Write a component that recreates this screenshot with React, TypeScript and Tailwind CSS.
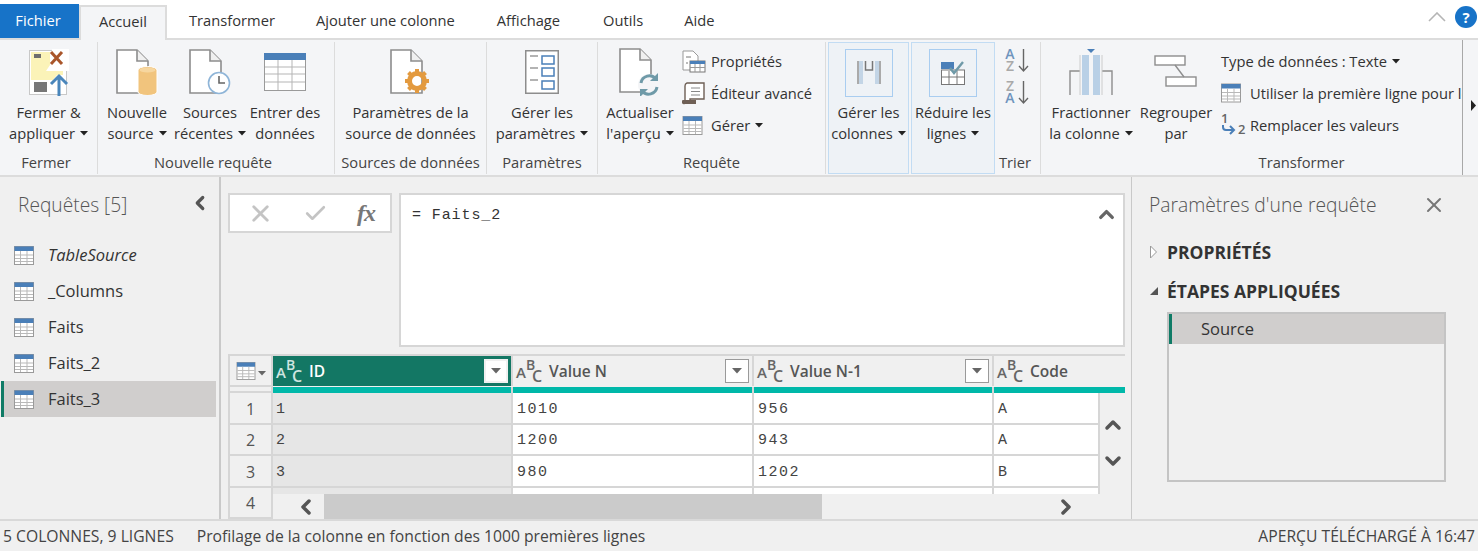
import React from 'react';
import { ChevronUp, ChevronDown, ChevronLeft, ChevronRight, X, Check } from 'lucide-react';

function Caret() {
    return (
        <svg width="8" height="5" viewBox="0 0 8 5" className="inline-block ml-[5px] mb-[4px]">
            <path d="M0 0h8L4 4.5z" fill="#222" />
        </svg>
    );
}

function TableIcon({ w = 20, h = 19 }: { w?: number; h?: number }) {
    return (
        <svg width={w} height={h} viewBox="0 0 20 19" className="shrink-0">
            <rect x="0.5" y="0.5" width="19" height="18" fill="#fff" stroke="#9a9a9a" />
            <rect x="0.5" y="0.5" width="19" height="4.5" fill="#4a7fb8" />
            <path d="M1 9h18M1 12.5h18M1 15.5h18M6.5 5v13M13 5v13" stroke="#b9b9b9" strokeWidth="1" />
        </svg>
    );
}

function DocShape() {
    return (
        <g>
            <path d="M1 1h20l11 11v32H1z" fill="#fff" stroke="#8d8d8d" strokeWidth="1.6" />
            <path d="M21 1v11h11" fill="#f0f0f0" stroke="#8d8d8d" strokeWidth="1.6" />
        </g>
    );
}

function FermerIcon() {
    return (
        <svg width="40" height="47" viewBox="0 0 40 47">
            <rect x="0.5" y="1.5" width="37" height="44" fill="#fff" stroke="#c8c8c8" />
            <path d="M2 3h19v13l-4 6h17v4h-6l-5 6v-1H2z" fill="#fbf3b8" />
            <rect x="5" y="5" width="7" height="4" fill="#6e6e6e" />
            <rect x="5" y="33" width="13" height="10" fill="#777" />
            <rect x="23" y="0" width="17" height="22" fill="#fff" />
            <path d="M22 3l11 12M33 3L22 15" stroke="#a9562b" strokeWidth="3" />
            <path d="M30 47V27M22 35l8-8 8 8" fill="none" stroke="#4a86bb" strokeWidth="3" />
        </svg>
    );
}

function NewSourceIcon() {
    return (
        <svg width="42" height="46" viewBox="0 0 42 46">
            <DocShape />
            <path d="M22 21a9.5 3.5 0 0 1 19 0v22a9.5 3.5 0 0 1-19 0z" fill="#f1c47d" stroke="#fff" strokeWidth="1" />
            <ellipse cx="31.5" cy="21" rx="8" ry="2.5" fill="#f6d69f" />
        </svg>
    );
}

function RecentIcon() {
    return (
        <svg width="42" height="46" viewBox="0 0 42 46">
            <DocShape />
            <circle cx="30" cy="34" r="10.5" fill="#fff" stroke="#8fb5d8" strokeWidth="1.6" />
            <path d="M30 27v7h6" fill="none" stroke="#666" strokeWidth="1.6" />
        </svg>
    );
}

function EnterDataIcon() {
    return (
        <svg width="42" height="38" viewBox="0 0 42 38">
            <rect x="0.5" y="0.5" width="41" height="37" fill="#fff" stroke="#9a9a9a" />
            <rect x="0" y="0" width="42" height="7" fill="#4a7fb8" />
            <path d="M1 14h40M1 21h40M1 29h40M14 7v30M28 7v30" stroke="#b5b5b5" strokeWidth="1" />
        </svg>
    );
}

function GearDocIcon() {
    return (
        <svg width="42" height="46" viewBox="0 0 42 46">
            <DocShape />
            <circle cx="27" cy="32" r="7.5" fill="none" stroke="#e39a3f" strokeWidth="5" />
            <path d="M27 20v5M27 39v5M15 32h5M34 32h5M18.5 23.5l3.5 3.5M32 37l3.5 3.5M35.5 23.5L32 27M22 37l-3.5 3.5" stroke="#e39a3f" strokeWidth="4" />
        </svg>
    );
}

function ParamsIcon() {
    return (
        <svg width="34" height="44" viewBox="0 0 34 44">
            <rect x="0.75" y="0.75" width="32.5" height="42.5" fill="#fff" stroke="#8d8d8d" strokeWidth="1.5" />
            <path d="M5 6h8M5 18h8M5 30h8" stroke="#9a9a9a" strokeWidth="1.5" />
            <rect x="17" y="6" width="12" height="8" fill="#fff" stroke="#4a7fb8" strokeWidth="1.5" />
            <rect x="17" y="18" width="12" height="8" fill="#fff" stroke="#4a7fb8" strokeWidth="1.5" />
            <rect x="17" y="31" width="12" height="8" fill="#fff" stroke="#4a7fb8" strokeWidth="1.5" />
        </svg>
    );
}

function RefreshDocIcon() {
    return (
        <svg width="42" height="48" viewBox="0 0 42 48">
            <DocShape />
            <circle cx="30" cy="37" r="11" fill="#f4f5f7" />
            <path d="M22 35a8.5 8.5 0 0 1 15-4M38 39a8.5 8.5 0 0 1-15 4" fill="none" stroke="#6f9aa8" strokeWidth="3" />
            <path d="M39 25v8h-8zM21 49v-8h8z" fill="#6f9aa8" />
        </svg>
    );
}

function PropsIcon() {
    return (
        <svg width="24" height="23" viewBox="0 0 24 23">
            <path d="M1 1h10l5 5v14H1z" fill="#fff" stroke="#999" />
            <path d="M4 7h5M4 13h2" stroke="#777" />
            <rect x="8" y="11" width="15" height="11" fill="#fff" stroke="#777" />
            <rect x="8" y="11" width="15" height="3" fill="#4a7fb8" />
            <path d="M8 17.5h15M13 14v8M18 14v8" stroke="#999" />
        </svg>
    );
}

function ScrollIcon() {
    return (
        <svg width="24" height="23" viewBox="0 0 24 23">
            <path d="M5 1h17v16H8v4H3V4a3 3 0 0 1 2-3z" fill="#fff" stroke="#6e5f55" strokeWidth="1.4" />
            <path d="M9 6h9M9 9.5h9M9 13h9" stroke="#888" />
            <path d="M1 18h13v4H3a2 2 0 0 1-2-4z" fill="#6e5f55" />
        </svg>
    );
}

function ManageColsIcon() {
    return (
        <svg width="24" height="25" viewBox="0 0 24 25">
            <rect x="0" y="1" width="6" height="23" fill="#c3d5e6" />
            <rect x="0" y="1" width="2" height="23" fill="#aaa" />
            <rect x="18" y="1" width="6" height="23" fill="#c3d5e6" />
            <rect x="22" y="1" width="2" height="23" fill="#aaa" />
            <path d="M8.5 1v9h7V1" fill="none" stroke="#777" strokeWidth="1.5" />
        </svg>
    );
}

function ReduceRowsIcon() {
    return (
        <svg width="24" height="24" viewBox="0 0 24 24">
            <rect x="0.5" y="9" width="23" height="14.5" fill="#fff" stroke="#777" />
            <rect x="0" y="1" width="13" height="7" fill="#4a7fb8" />
            <path d="M0 16h24M8 10v14M16 10v14" stroke="#777" />
            <path d="M9 7l4 5 9-11" fill="none" stroke="#6f9aa8" strokeWidth="2.4" />
        </svg>
    );
}

function SortIcon({ top, bottom }: { top: string; bottom: string }) {
    return (
        <svg width="26" height="27" viewBox="0 0 26 27" className="shrink-0 overflow-visible" style={{ fontFamily: '"Open Sans", sans-serif' }}>
            <text x="7" y="11" textAnchor="middle" fontSize="14" fontWeight="600" fill={top === 'A' ? '#6f94bd' : '#a9a9a9'}>{top}</text>
            <text x="7" y="23" textAnchor="middle" fontSize="14" fontWeight="600" fill={bottom === 'A' ? '#6f94bd' : '#a9a9a9'}>{bottom}</text>
            <path d="M20.5 1v22M16 18l4.5 5 4.5-5" fill="none" stroke="#666" strokeWidth="1.4" />
        </svg>
    );
}

function SplitIcon() {
    return (
        <svg width="44" height="46" viewBox="0 0 44 46">
            <path d="M1 46V22h10M43 46V22H33" fill="none" stroke="#8d8d8d" strokeWidth="1.4" />
            <rect x="13" y="6" width="7" height="40" fill="#b9d0e6" />
            <rect x="24" y="6" width="7" height="40" fill="#b9d0e6" />
            <path d="M11 6v40M33 6v40" stroke="#ccc" />
            <path d="M18 0h8l-4 4z" fill="#4a7fb8" />
        </svg>
    );
}

function GroupByIcon() {
    return (
        <svg width="44" height="34" viewBox="0 0 44 34">
            <rect x="1" y="1" width="30" height="9" fill="#fff" stroke="#8d8d8d" strokeWidth="1.4" />
            <rect x="12" y="22" width="30" height="9" fill="#fff" stroke="#8d8d8d" strokeWidth="1.4" />
            <path d="M21 10l9 12" stroke="#8d8d8d" strokeWidth="1.4" />
        </svg>
    );
}

function ReplaceIcon() {
    return (
        <svg width="26" height="24" viewBox="0 0 26 24" className="shrink-0 overflow-visible" style={{ fontFamily: '"Open Sans", sans-serif' }}>
            <text x="0" y="10" fontSize="13" fontWeight="600" fill="#666">1</text>
            <text x="17" y="21" fontSize="13" fontWeight="600" fill="#666">2</text>
            <path d="M2 12v2a3 3 0 0 0 3 3h8M9 13l4 4-4 4" fill="none" stroke="#4a7fb8" strokeWidth="2" />
        </svg>
    );
}

function AbcIcon({ color }: { color: string }) {
    return (
        <svg width="26" height="26" viewBox="0 0 26 26" className="shrink-0 overflow-visible" style={{ fontFamily: '"Open Sans", sans-serif' }}>
            <text x="0" y="20" fontSize="15" fontWeight="600" fill={color}>A</text>
            <text x="10" y="12" fontSize="14" fontWeight="600" fill={color}>B</text>
            <text x="16" y="24" fontSize="16" fontWeight="600" fill={color}>C</text>
        </svg>
    );
}

function FilterButton({ active }: { active?: boolean }) {
    return (
        <div className={`ml-auto w-[24px] h-[24px] bg-white flex items-center justify-center shrink-0 ${active ? 'border-2 border-[#f0f0f0]' : 'border border-[#9a9a9a]'}`}>
            <svg width="10" height="6" viewBox="0 0 10 6">
                <path d="M0 0h10L5 5.5z" fill="#666" />
            </svg>
        </div>
    );
}

function BigButton({ w, icon, line1, line2, caret, highlight }: { w: number; icon: React.ReactNode; line1: string; line2: string; caret?: boolean; highlight?: boolean }) {
    return (
        <div className="flex flex-col items-center shrink-0" style={{ width: w }}>
            {highlight ? (
                <div className="h-[59px] flex items-center justify-center">
                    <div className="w-[48px] h-[48px] border border-[#a9cdf0] flex items-center justify-center">{icon}</div>
                </div>
            ) : (
                <div className="h-[60px] flex items-center justify-center">{icon}</div>
            )}
            <div className="text-center leading-[21px] whitespace-nowrap">
                <div>{line1}</div>
                <div>{line2}{caret && <Caret />}</div>
            </div>
        </div>
    );
}

function SmallButton({ icon, label, caret }: { icon: React.ReactNode; label: string; caret?: boolean }) {
    return (
        <div className="h-[32px] flex items-center whitespace-nowrap">
            <div className="w-[29px] shrink-0 flex items-center">{icon}</div>
            <span>{label}{caret && <Caret />}</span>
        </div>
    );
}

function Group({ w, label, children, className = '', labelClassName = '' }: { w: number; label: string; children: React.ReactNode; className?: string; labelClassName?: string }) {
    return (
        <div className="flex flex-col shrink-0 h-[132px] border-r border-[#dcdcdc]" style={{ width: w }}>
            <div className={`flex-1 flex ${className}`}>{children}</div>
            <div className={`h-[22px] text-center text-[#444] leading-[20px] ${labelClassName}`}>{label}</div>
        </div>
    );
}

function Ribbon() {
    return (
        <div className="flex h-[137px] bg-[#f4f5f7] border-b-2 border-[#dcdcdc] pt-[2px] overflow-hidden">
            <Group w={98} label="Fermer" className="justify-center" labelClassName="pr-[5px]">
                <BigButton w={90} icon={<FermerIcon />} line1="Fermer &" line2="appliquer" caret />
            </Group>
            <Group w={237} label="Nouvelle requête" className="pl-[2px]" labelClassName="pr-[6px]">
                <BigButton w={74} icon={<NewSourceIcon />} line1="Nouvelle" line2="source" caret />
                <BigButton w={72} icon={<RecentIcon />} line1="Sources" line2="récentes" caret />
                <BigButton w={78} icon={<EnterDataIcon />} line1="Entrer des" line2="données" />
            </Group>
            <Group w={152} label="Sources de données" className="justify-center">
                <BigButton w={150} icon={<GearDocIcon />} line1="Paramètres de la" line2="source de données" />
            </Group>
            <Group w={111} label="Paramètres" className="justify-center">
                <BigButton w={100} icon={<ParamsIcon />} line1="Gérer les" line2="paramètres" caret />
            </Group>
            <Group w={228} label="Requête" className="pl-[7px] gap-[7px]">
                <BigButton w={70} icon={<RefreshDocIcon />} line1="Actualiser" line2="l'aperçu" caret />
                <div className="flex flex-col pt-[3px]">
                    <SmallButton icon={<PropsIcon />} label="Propriétés" />
                    <SmallButton icon={<ScrollIcon />} label="Éditeur avancé" />
                    <SmallButton icon={<TableIcon w={21} h={19} />} label="Gérer" caret />
                </div>
            </Group>
            <div className="flex shrink-0 h-[132px] gap-[2px] pl-[2px]">
                <div className="w-[81px] bg-[#eef2f6] border border-[#c2dcf3]">
                    <BigButton w={79} highlight icon={<ManageColsIcon />} line1="Gérer les" line2="colonnes" caret />
                </div>
                <div className="w-[84px] bg-[#eef2f6] border border-[#c2dcf3]">
                    <BigButton w={82} highlight icon={<ReduceRowsIcon />} line1="Réduire les" line2="lignes" caret />
                </div>
            </div>
            <Group w={46} label="Trier" labelClassName="pr-[5px]">
                <div className="flex flex-col gap-[5px] pl-[8px] pt-[6px]">
                    <SortIcon top="A" bottom="Z" />
                    <SortIcon top="Z" bottom="A" />
                </div>
            </Group>
            <div className="flex flex-col shrink-0 w-[421px] h-[132px]">
                <div className="flex-1 flex pl-[9px] min-h-0">
                    <BigButton w={82} icon={<SplitIcon />} line1="Fractionner" line2="la colonne" caret />
                    <BigButton w={88} icon={<GroupByIcon />} line1="Regrouper" line2="par" />
                    <div className="flex flex-col pt-[3px] pl-[1px] overflow-hidden flex-1">
                        <div className="h-[32px] flex items-center whitespace-nowrap"><span>Type de données : Texte<Caret /></span></div>
                        <SmallButton icon={<TableIcon w={20} h={20} />} label="Utiliser la première ligne pour les en-têtes" />
                        <SmallButton icon={<ReplaceIcon />} label="Remplacer les valeurs" />
                    </div>
                </div>
                <div className="h-[22px] text-center text-[#444] leading-[20px] pl-[100px]">Transformer</div>
            </div>
            <div className="flex-1 border-l border-[#a8a8a8] -mt-[2px] flex items-center justify-end pr-[1px] pb-[5px]">
                <svg width="7" height="11" viewBox="0 0 7 11"><path d="M1 0l5 5.5L1 11z" fill="#222" /></svg>
            </div>
        </div>
    );
}

function TopTabs() {
    return (
        <div className="h-[38px] flex items-end border-b-2 border-[#dcdcdc] bg-white box-content">
            <div className="w-[79px] h-[34px] bg-[#1773c8] text-white flex items-center justify-center pb-[2px] pr-[3px]">Fichier</div>
            <div className="w-[88px] h-[35px] -mb-[2px] bg-[#f4f5f7] border-t-2 border-x-2 border-[#dcdcdc] flex items-center justify-center pb-[4px]">Accueil</div>
            <div className="flex h-[34px] items-center pl-[22px] pb-[2px]">
                <span>Transformer</span>
                <span className="ml-[41px]">Ajouter une colonne</span>
                <span className="ml-[42px]">Affichage</span>
                <span className="ml-[43px]">Outils</span>
                <span className="ml-[41px]">Aide</span>
            </div>
            <div className="ml-auto flex h-[38px] items-center gap-[9px] pr-[1px] pb-[4px]">
                <svg width="18" height="10" viewBox="0 0 18 10"><path d="M1 9l8-8 8 8" fill="none" stroke="#b5b5b5" strokeWidth="1.6" /></svg>
                <div className="w-[22px] h-[22px] rounded-full bg-[#1773c8] text-white flex items-center justify-center font-bold text-[15px]">?</div>
            </div>
        </div>
    );
}

const queries = ['TableSource', '_Columns', 'Faits', 'Faits_2', 'Faits_3'];

function QueriesPane() {
    return (
        <div className="w-[221px] shrink-0 border-r-2 border-[#c9c9c9] flex flex-col">
            <div className="h-[60px] flex items-start justify-between pl-[18px] pr-[8px] pt-[14px]">
                <span className="text-[19.2px] leading-[28px] text-[#555] font-light">Requêtes [5]</span>
                <ChevronLeft size={22} strokeWidth={3.5} className="text-[#555] mt-[1px]" />
            </div>
            <div className="flex flex-col pl-[1px] pr-[3px]">
                {queries.map((q, i) => (
                    <div key={q} className={`h-[36px] flex items-center gap-[14px] text-[16.5px] ${i === 4 ? 'bg-[#d0cecd] border-l-[3px] border-[#0f7b66] pl-[10px]' : 'pl-[13px]'} ${i === 0 ? 'italic' : ''}`}>
                        <TableIcon />
                        <span>{q}</span>
                    </div>
                ))}
            </div>
        </div>
    );
}

function FormulaBar() {
    return (
        <div className="flex gap-[7px] h-[154px] items-start">
            <div className="w-[164px] h-[40px] bg-white border-2 border-[#d6d6d6] flex items-center justify-between pl-[17px] pr-[14px]">
                <X size={27} strokeWidth={2.5} className="text-[#c4c4c4]" />
                <Check size={25} strokeWidth={2.5} className="text-[#c4c4c4]" />
                <span className="text-[24px] leading-[24px] italic font-bold tracking-[-1px] text-[#777] pr-[1px]" style={{ fontFamily: '"Liberation Serif", serif' }}>fx</span>
            </div>
            <div className="flex-1 h-[154px] bg-white border-2 border-[#d6d6d6] flex items-start justify-between pl-[11px] pr-[5px] pt-[7px]">
                <span className="text-[15px] leading-[24px] mt-[2px] text-[#333] tracking-[0.9px]" style={{ fontFamily: '"Liberation Mono", monospace' }}>= Faits_2</span>
                <ChevronUp size={23} strokeWidth={3.5} className="text-[#666] mt-[1px]" />
            </div>
        </div>
    );
}

const columns = [
    { name: 'ID', w: 240, values: ['1', '2', '3'] },
    { name: 'Value N', w: 241, values: ['1010', '1200', '980'] },
    { name: 'Value N-1', w: 240, values: ['956', '943', '1202'] },
    { name: 'Code', w: 106, values: ['A', 'A', 'B'] },
];

function DataGrid() {
    return (
        <div className="flex-1 flex border-t-2 border-l-2 border-[#d6d6d6] mt-[7px] overflow-hidden min-h-0">
            <div className="w-[43px] shrink-0 flex flex-col text-[#555] text-[16px] border-r-2 border-[#d6d6d6]">
                <div className="h-[31px] border-b-2 border-[#d6d6d6] flex items-center justify-center">
                    <TableIcon w={20} h={18} />
                    <svg width="8" height="5" viewBox="0 0 8 5" className="ml-[2px] mt-[6px]"><path d="M0 0h8L4 4.5z" fill="#666" /></svg>
                </div>
                <div className="h-[6px] border-b-2 border-[#d6d6d6]" />
                {['1', '2', '3', '4'].map(n => (
                    <div key={n} className="h-[31.5px] shrink-0 border-b-2 border-[#d6d6d6] flex items-center justify-center pt-[2px]">{n}</div>
                ))}
            </div>
            <div className="flex-1 flex flex-col min-w-0">
                <div className="flex h-[31px] shrink-0">
                    {columns.map((c, i) => (
                        <div key={c.name} className={`flex items-center h-[30px] pl-[3px] pr-[3px] gap-[7px] text-[15.5px] font-semibold ${i === 3 ? 'flex-1' : 'shrink-0 border-r-2 border-[#d6d6d6]'} ${i === 0 ? 'bg-[#137764] text-white' : 'text-[#555]'}`} style={i === 3 ? undefined : { width: c.w }}>
                            <AbcIcon color={i === 0 ? '#cfe5e0' : '#666'} />
                            <span className="pt-[2px]">{c.name}</span>
                            {i < 3 && <FilterButton active={i === 0} />}
                        </div>
                    ))}
                </div>
                <div className="flex h-[6px] shrink-0">
                    {columns.map((c, i) => (
                        <div key={c.name} className={`bg-[#00b8a9] h-full ${i === 3 ? 'flex-1' : 'shrink-0 border-r-2 border-[#d6d6d6]'}`} style={i === 3 ? undefined : { width: c.w }} />
                    ))}
                </div>
                <div className="flex h-[101px] shrink-0 overflow-hidden">
                    {columns.map((c, i) => (
                        <div key={c.name} className={`shrink-0 border-r-2 border-[#d6d6d6] last:border-r-0 ${i === 0 ? 'bg-[#e6e6e6]' : 'bg-white'}`} style={{ width: c.w }}>
                            {c.values.map(v => (
                                <div key={v} className={`h-[31.5px] border-b-2 border-[#d6d6d6] flex items-center pt-[4px] text-[15px] tracking-[1.5px] text-[#444] ${i === 0 ? 'pl-[3px]' : 'pl-[4px]'}`} style={{ fontFamily: '"Liberation Mono", monospace' }}>{v}</div>
                            ))}
                        </div>
                    ))}
                    <div className="flex-1 bg-[#f0f0f0] flex flex-col items-center pt-[20px]">
                        <ChevronUp size={24} strokeWidth={3.5} className="text-[#555]" />
                        <ChevronDown size={24} strokeWidth={3.5} className="text-[#555] mt-[12px]" />
                    </div>
                </div>
                <div className="h-[25px] flex items-center bg-[#f0f0f0]">
                    <div className="w-[51px] flex justify-center shrink-0 pl-[14px]"><ChevronLeft size={24} strokeWidth={3.5} className="text-[#555]" /></div>
                    <div className="w-[498px] h-full bg-[#cbcbcb] shrink-0" />
                    <div className="w-[256px] flex justify-end shrink-0"><ChevronRight size={24} strokeWidth={3.5} className="text-[#555]" /></div>
                </div>
            </div>
        </div>
    );
}

function SettingsPane() {
    return (
        <div className="w-[347px] shrink-0 border-l border-[#c9c9c9] pl-[17px] flex flex-col">
            <div className="h-[60px] flex items-start justify-between pr-[32px] pt-[14px]">
                <span className="text-[19.3px] leading-[28px] text-[#555] font-light">Paramètres d'une requête</span>
                <X size={24} strokeWidth={2} className="text-[#777] mt-[2px]" />
            </div>
            <div className="h-[30px] flex items-center font-bold text-[17.5px] text-[#333]">
                <svg width="18" height="14" viewBox="0 0 18 14" className="shrink-0"><path d="M1.5 1l6 6-6 6z" fill="#fff" stroke="#999" /></svg>
                <span>PROPRIÉTÉS</span>
            </div>
            <div className="h-[30px] mt-[9px] flex items-center font-bold text-[17.5px] text-[#333]">
                <svg width="18" height="14" viewBox="0 0 18 14" className="shrink-0"><path d="M9 3v8H1z" fill="#555" /></svg>
                <span>ÉTAPES APPLIQUÉES</span>
            </div>
            <div className="ml-[18px] mt-[6px] w-[279px] h-[170px] border-2 border-[#c4c4c4]">
                <div className="h-[30px] bg-[#d0cecd] border-l-[3px] border-[#0f7b66] pl-[29px] flex items-center text-[16.5px]">Source</div>
            </div>
        </div>
    );
}

export default function App() {
    return (
        <div className="w-[1478px] h-[551px] overflow-hidden flex flex-col bg-[#f0f0f0] text-[14.7px] text-[#333]" style={{ fontFamily: '"Open Sans", sans-serif' }}>
            <TopTabs />
            <Ribbon />
            <div className="flex h-[342px] shrink-0">
                <QueriesPane />
                <div className="w-[910px] shrink-0 flex flex-col pl-[7px] pr-[6px] pt-[16px]">
                    <FormulaBar />
                    <DataGrid />
                </div>
                <SettingsPane />
            </div>
            <div className="flex-1 border-t-2 border-[#d9d9d9] flex items-center pl-[3px] pr-[3px] pt-[1px] text-[15.7px] text-[#444] whitespace-nowrap">
                <span>5 COLONNES, 9 LIGNES</span>
                <span className="ml-[23px]">Profilage de la colonne en fonction des 1000 premières lignes</span>
                <span className="ml-auto">APERÇU TÉLÉCHARGÉ À 16:47</span>
            </div>
        </div>
    );
}
